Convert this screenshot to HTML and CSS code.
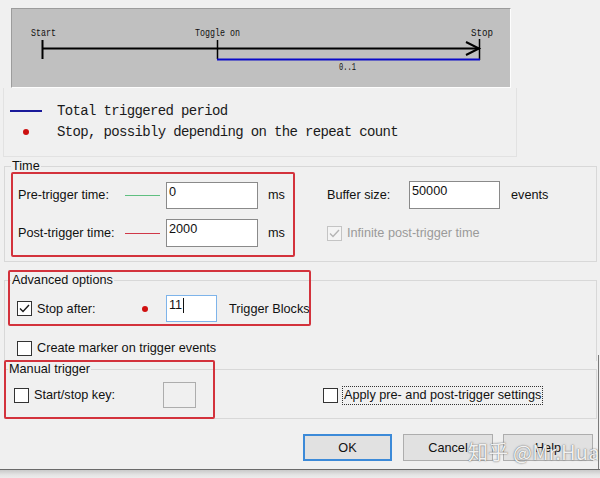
FILE: index.html
```html
<!DOCTYPE html>
<html>
<head>
<meta charset="utf-8">
<link rel="stylesheet" href="styles.css">
</head>
<body>
<div class="dialog">
  <div class="diagram">
    <svg width="498" height="78" viewBox="0 0 498 78">
      <g class="dg-text">
        <text x="19" y="27" textLength="25" lengthAdjust="spacingAndGlyphs">Start</text>
        <text x="183" y="27" textLength="45" lengthAdjust="spacingAndGlyphs">Toggle on</text>
        <text x="459" y="27" textLength="22" lengthAdjust="spacingAndGlyphs">Stop</text>
        <text x="327" y="61" textLength="17" lengthAdjust="spacingAndGlyphs">0..1</text>
      </g>
      <line x1="30" y1="39.5" x2="467" y2="39.5" stroke="#000" stroke-width="2"/>
      <line x1="30.5" y1="31" x2="30.5" y2="50" stroke="#000" stroke-width="2"/>
      <line x1="205.5" y1="31" x2="205.5" y2="50" stroke="#000" stroke-width="1.5"/>
      <line x1="467.5" y1="30" x2="467.5" y2="51" stroke="#000" stroke-width="1.5"/>
      <polyline points="454,33 467,39.5 454,46" fill="none" stroke="#000" stroke-width="2"/>
      <line x1="205" y1="50.5" x2="468" y2="50.5" stroke="#0a0ac8" stroke-width="2"/>
    </svg>
  </div>

  <div class="legend">
    <div class="legend-row">
      <span class="legend-key"><span class="key-line"></span></span>
      <span>Total triggered period</span>
    </div>
    <div class="legend-row">
      <span class="legend-key"><span class="key-dot"></span></span>
      <span>Stop, possibly depending on the repeat count</span>
    </div>
  </div>

  <fieldset class="group group-time">
    <legend>Time</legend>
    <div class="row row-time">
      <span class="lbl-time">Pre-trigger time:</span>
      <span class="mark mark-green"></span>
      <span class="field field-time">0</span>
      <span class="unit">ms</span>
      <span class="lbl-buf">Buffer size:</span>
      <span class="field field-buf">50000</span>
      <span>events</span>
    </div>
    <div class="row row-time">
      <span class="lbl-time">Post-trigger time:</span>
      <span class="mark mark-red"></span>
      <span class="field field-time">2000</span>
      <span class="unit">ms</span>
      <span class="cb cb-disabled">
        <svg width="13" height="13" viewBox="0 0 13 13"><polyline points="2,6.5 5,9.5 11,3" fill="none" stroke="#b4b4b4" stroke-width="1.4"/></svg>
      </span>
      <span class="disabled-text">Infinite post-trigger time</span>
    </div>
  </fieldset>

  <fieldset class="group group-adv">
    <legend>Advanced options</legend>
    <div class="row row-stop">
      <span class="cb">
        <svg width="13" height="13" viewBox="0 0 13 13"><polyline points="2,6.5 5,9.5 11,3" fill="none" stroke="#1a1a1a" stroke-width="1.4"/></svg>
      </span>
      <span class="lbl-stop">Stop after:</span>
      <span class="dot"></span>
      <span class="field field-blocks">11<span class="caret"></span></span>
      <span class="lbl-blocks">Trigger Blocks</span>
    </div>
    <div class="row row-marker">
      <span class="cb"></span>
      <span class="cb-text">Create marker on trigger events</span>
    </div>
  </fieldset>

  <fieldset class="group group-manual">
    <legend>Manual trigger</legend>
    <div class="row row-manual">
      <span class="cb"></span>
      <span class="lbl-key">Start/stop key:</span>
      <span class="keybox"></span>
      <span class="cb"></span>
      <span class="focus-text">Apply pre- and post-trigger settings</span>
    </div>
  </fieldset>

  <div class="buttons">
    <span class="btn btn-default">OK</span>
    <span class="btn">Cancel</span>
    <span class="btn">Help</span>
  </div>

  <div class="annot annot-time"></div>
  <div class="annot annot-adv"></div>
  <div class="annot annot-manual"></div>
  <div class="watermark">知乎 @Mr.Hua</div>
</div>
<div class="below"></div>
</body>
</html>
```

FILE: styles.css
```css
* { box-sizing: border-box; }
html, body { margin: 0; padding: 0; }
body {
  width: 600px;
  height: 478px;
  overflow: hidden;
  background: #e6e6e6;
  font-family: "Liberation Sans", Arial, sans-serif;
  font-size: 12.7px;
  color: #111;
}
.dialog {
  position: relative;
  height: 470px;
  background: #f0f0f0;
  border-bottom: 1px solid #6a6a6a;
  padding-top: 8px;
}
.dialog::after {
  content: "";
  position: absolute;
  right: 1px;
  top: 355px;
  bottom: 0;
  width: 1px;
  background: #7a7a7a;
}
.below {
  height: 8px;
  background: linear-gradient(#c9c9c9, #e4e4e4 60%, #ececec);
}

/* diagram */
.diagram {
  margin-left: 11px;
  width: 500px;
  height: 80px;
  background: #c0c0c0;
  border-top: 1px solid #9c9c9c;
  border-left: 1px solid #9c9c9c;
  border-right: 1px solid #fdfdfd;
  border-bottom: 1px solid #fdfdfd;
}
.diagram svg { display: block; }
.dg-text text {
  font-family: "Liberation Mono", monospace;
  font-size: 10.5px;
  fill: #111;
}

/* legend */
.legend {
  margin-left: 3px;
  width: 514px;
  height: 69px;
  padding-top: 12px;
  border: 1px solid #e2e2e2;
  border-top: none;
  font-family: "Liberation Mono", monospace;
  font-size: 14px;
  letter-spacing: -0.65px;
  color: #1a1a1a;
}
.legend-row {
  display: flex;
  align-items: center;
  height: 21px;
  padding-left: 6px;
}
.legend-key {
  width: 47px;
  display: flex;
  align-items: center;
}
.key-line {
  width: 32px;
  height: 2px;
  background: #1a1a9a;
}
.key-dot {
  margin-left: 13px;
  width: 6px;
  height: 6px;
  border-radius: 50%;
  background: #cc1010;
}

/* groups */
.group {
  margin: 0 0 0 4px;
  width: 593px;
  min-inline-size: 0;
  border: 1px solid #d8d8d8;
  padding: 0;
}
.group legend {
  padding: 0 1px;
  line-height: 16px;
  height: 16px;
}
.group-time {
  margin-top: 1px;
  padding: 7px 0 14px 13px;
}
.group-time legend { margin-left: -7px; }
.group-adv {
  margin-top: 10px;
  padding: 7px 0 3px 12px;
  border-bottom: none;
}
.group-adv legend { margin-left: -6px; }
.group-manual {
  padding: 5px 0 10px 9px;
}
.group-manual legend { margin-left: -6px; }

.row {
  display: flex;
  align-items: center;
}
.row-time { height: 28px; }
.row-time + .row-time { margin-top: 10px; }

.lbl-time { width: 107px; }
.mark { width: 35px; height: 1px; margin-right: 6px; }
.mark-green { background: #5fbf80; }
.mark-red { background: #d03848; }

.field {
  display: block;
  background: #fff;
  border: 1px solid #8a8a8a;
  padding: 2px 2px 0;
  line-height: 15px;
  color: #111;
}
.field-time { width: 92px; height: 27px; margin-right: 10px; }
.row-time:nth-of-type(2) .field-time { height: 28px; }
.unit { width: 59px; }
.lbl-buf { width: 82px; }
.field-buf { width: 91px; height: 28px; margin-right: 11px; }

.cb {
  width: 15px;
  height: 15px;
  flex: none;
  border: 1px solid #333;
  background: #fff;
  display: flex;
  align-items: center;
  justify-content: center;
}
.cb-disabled {
  border-color: #c4c4c4;
  background: #f4f4f4;
}
.disabled-text { margin-left: 5px; color: #9a9a9a; }

.row-stop { height: 27px; }
.lbl-stop { margin-left: 5px; width: 105px; }
.dot {
  width: 6px;
  height: 6px;
  border-radius: 50%;
  background: #d01010;
  margin-right: 18px;
}
.field-blocks {
  width: 51px;
  height: 27px;
  border-color: #7eb4ea;
  display: flex;
  align-items: flex-start;
}
.caret {
  display: inline-block;
  width: 1px;
  height: 15px;
  background: #111;
  margin-left: 1px;
}
.lbl-blocks { margin-left: 12px; }

.row-marker { height: 20px; margin-top: 16px; }
.cb-text { margin-left: 5px; }

.row-manual { height: 26px; }
.lbl-key { margin-left: 5px; width: 129px; }
.keybox {
  width: 33px;
  height: 26px;
  border: 1px solid #adadad;
  margin-right: 127px;
}
.focus-text {
  margin-left: 4px;
  padding: 1px 1px;
  border: 1px dotted #333;
  line-height: 15px;
}

/* buttons */
.buttons {
  display: flex;
  gap: 10px;
  margin-top: 15px;
  padding-left: 303px;
}
.btn {
  width: 90px;
  height: 27px;
  background: #e1e1e1;
  border: 1px solid #adadad;
  display: flex;
  align-items: center;
  justify-content: center;
}
.btn-default {
  width: 89px;
  margin-right: 1px;
  border: 2px solid #3c8ad8;
}

/* annotations (overlay) */
.annot {
  position: absolute;
  border: 2px solid #d3323c;
  border-radius: 2px;
}
.annot-time { left: 11px; top: 172px; width: 284px; height: 85px; }
.annot-adv { left: 8px; top: 270px; width: 303px; height: 56px; }
.annot-manual { left: 4px; top: 360px; width: 211px; height: 59px; }

.watermark {
  position: absolute;
  left: 468px;
  top: 439px;
  white-space: nowrap;
  font-family: "Noto Sans CJK SC", "Noto Sans", sans-serif;
  font-size: 20px;
  line-height: 26px;
  color: rgba(255, 255, 255, 0.92);
  text-shadow: 0 0 1px rgba(60, 60, 60, 0.7), 0 0 2px rgba(80, 80, 80, 0.5);
  letter-spacing: 0.2px;
}
```
